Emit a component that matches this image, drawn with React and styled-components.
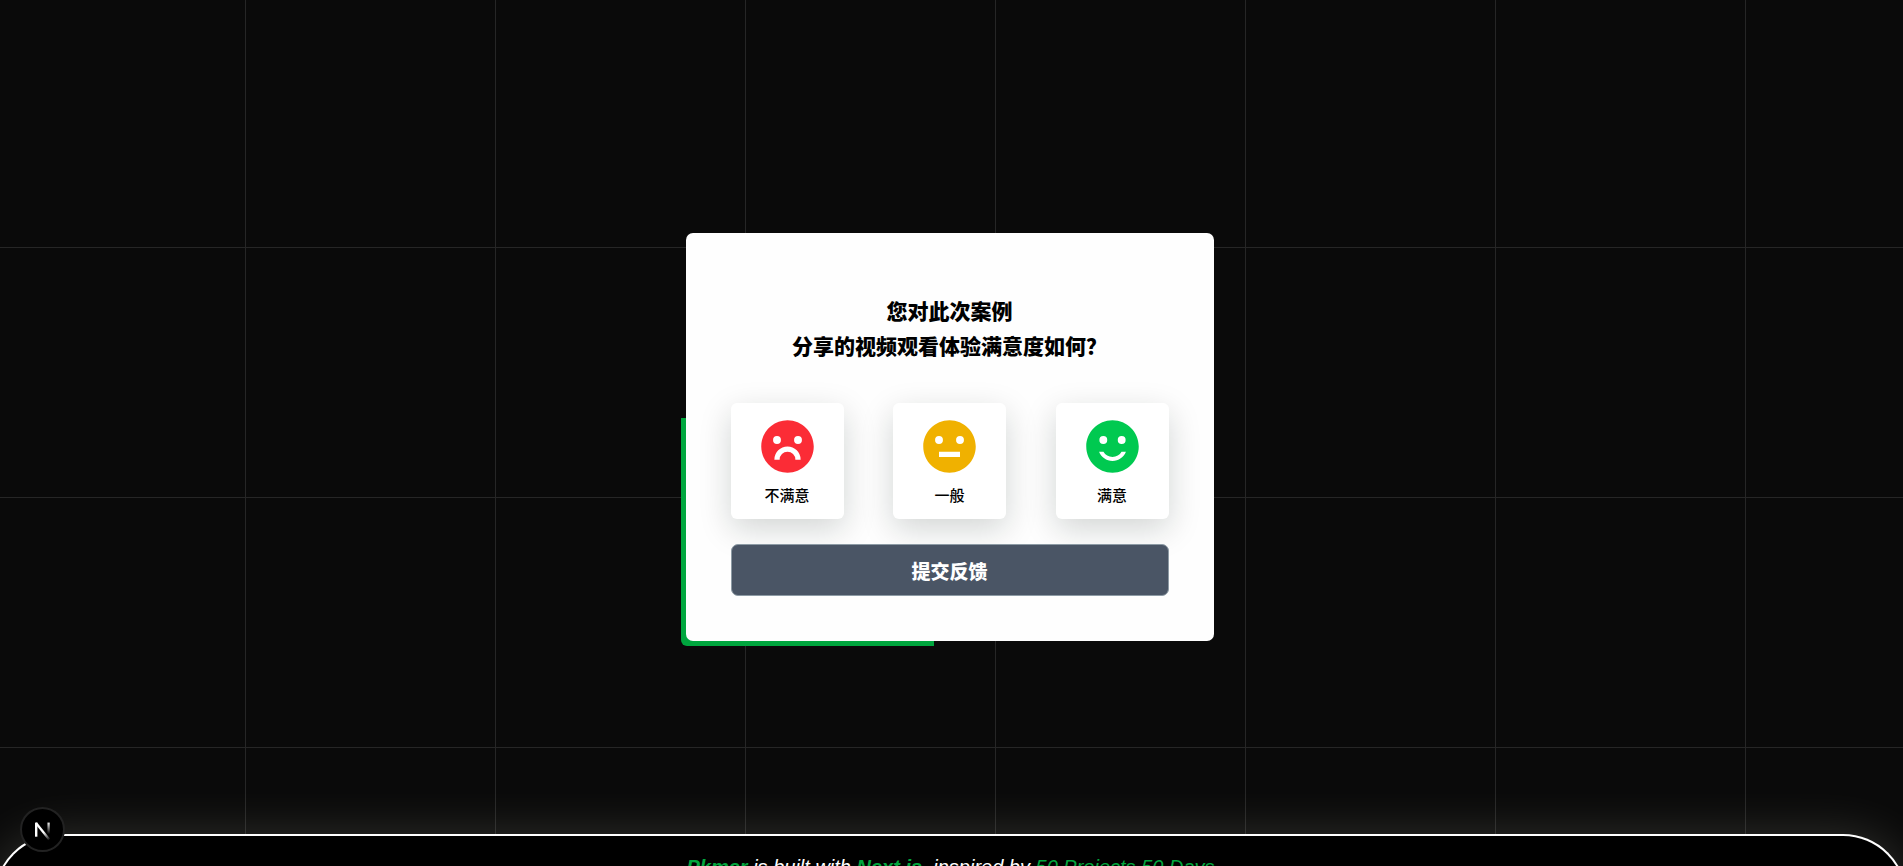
import React, { useState } from "react";
import styled, { createGlobalStyle } from "styled-components";

const GlobalStyle = createGlobalStyle`
  *, *::before, *::after { box-sizing: border-box; }
  body {
    margin: 0;
    background: #0a0a0a;
    color: #fff;
    font-family: "Liberation Sans", Arial, "Noto Sans CJK SC", sans-serif;
  }
`;

const Page = styled.div`
  position: relative;
  display: flex;
  flex-direction: column;
  height: 100vh;
  overflow: hidden;
  background-color: #0a0a0a;
  background-image:
    linear-gradient(to right, #262626 1px, transparent 1px),
    linear-gradient(to bottom, #262626 1px, transparent 1px);
  background-size: 250px 250px;
  background-position: 245px 247px;
`;

const Main = styled.main`
  flex: 0 0 calc(100vh - 32px);
  display: flex;
  align-items: center;
  justify-content: center;
  padding-top: 40px;
`;

const CardFrame = styled.div`
  position: relative;
  margin-right: 4px;

  &::before {
    content: "";
    position: absolute;
    left: -5px;
    bottom: -5px;
    width: 48%;
    height: 56%;
    border-radius: 0 0 0 6px;
    background: #00a63e;
  }
`;

const Card = styled.form`
  position: relative;
  display: flex;
  flex-direction: column;
  gap: 25px;
  width: 528px;
  padding: 60px 45px 45px;
  border-radius: 7px;
  background: #fefefe;
  color: #000;
  font-family: "Noto Sans CJK SC", sans-serif;
`;

const Title = styled.h1`
  margin: 0 0 15px;
  font-size: 21px;
  line-height: 35px;
  font-weight: 900;
  text-align: center;
`;

const Options = styled.fieldset`
  display: flex;
  justify-content: space-between;
  margin: 0;
  padding: 0;
  border: 0;
`;

const Option = styled.label`
  display: flex;
  flex-direction: column;
  align-items: center;
  gap: 5px;
  width: 113px;
  height: 116px;
  padding-top: 12px;
  border-radius: 6px;
  background: #fff;
  box-shadow: 0 10px 32px rgba(10, 25, 20, 0.18);
  font-size: 15px;
  line-height: 24px;
  font-weight: 500;
  cursor: pointer;
`;

const HiddenRadio = styled.input`
  position: absolute;
  opacity: 0;
  pointer-events: none;
`;

const Face = styled.svg`
  width: 63px;
  height: 63px;
  fill: ${(p) => p.$color};
`;

const Submit = styled.button`
  height: 52px;
  border: 1px solid #8d9ba5;
  border-radius: 7px;
  background: #4a5565;
  color: #fff;
  font-family: inherit;
  font-size: 19px;
  font-weight: 900;
  cursor: pointer;
`;

const Footer = styled.footer`
  flex: none;
  margin: 0 -4px 0 -6px;
  padding: 17px 64px 24px;
  border: 2px solid #fff;
  border-bottom: 0;
  border-radius: 64px 64px 0 0;
  background: #000;
  box-shadow: 0 0 50px rgba(255, 255, 230, 0.16);
  text-align: center;
  font-size: 20px;
  line-height: 28px;
  font-style: italic;
  white-space: nowrap;

  p { margin: 0; }
`;

const FooterLink = styled.a`
  color: #00a63e;
  text-decoration: none;
  font-weight: ${(p) => (p.$bold ? 700 : 400)};
`;

const DevBadge = styled.button`
  position: absolute;
  left: 20px;
  bottom: 14px;
  width: 45px;
  height: 45px;
  padding: 0;
  border: 2px solid #222;
  border-radius: 50%;
  background: #000;

  svg { display: block; width: 41px; height: 41px; }
`;

const DISC = "M12 22C6.477 22 2 17.523 2 12S6.477 2 12 2s10 4.477 10 10-4.477 10-10 10z";
const eyes = (l, r) =>
  [l, r].map((x) => `M${x - 1.5} 9.5a1.5 1.5 0 1 0 3 0a1.5 1.5 0 1 0-3 0z`).join("");

const OPTIONS = [
  { label: "不满意", color: "#fb2c36", d: DISC + eyes(8, 16) + "M7 17h2a3 3 0 0 1 6 0h2a5 5 0 0 0-10 0z" },
  { label: "一般", color: "#f0b100", d: DISC + eyes(8, 16) + "M8 14v2h8v-2z" },
  {
    label: "满意",
    color: "#00c950",
    d: DISC + eyes(8.5, 15.5) +
      "M12 16c-1.48 0-2.75-.81-3.45-2H6.88c.8 2.05 2.79 3.5 5.12 3.5s4.32-1.45 5.12-3.5h-1.67c-.7 1.19-1.97 2-3.45 2z",
  },
];

function NextMark() {
  return (
    <svg viewBox="0 0 41 41" fill="none" aria-hidden="true">
      <defs>
        <linearGradient id="stem" x1="0" y1="13" x2="0" y2="25" gradientUnits="userSpaceOnUse">
          <stop stopColor="#fff" />
          <stop offset="1" stopColor="#fff" stopOpacity="0" />
        </linearGradient>
        <linearGradient id="slash" x1="22" y1="23" x2="28" y2="31" gradientUnits="userSpaceOnUse">
          <stop stopColor="#fff" />
          <stop offset="1" stopColor="#fff" stopOpacity="0" />
        </linearGradient>
      </defs>
      <path d="M14.2 27.7V13.6" stroke="#fff" strokeWidth="2.4" />
      <path d="M14 14L27.2 30.5" stroke="url(#slash)" strokeWidth="2.3" />
      <path d="M26.6 13.6v12" stroke="url(#stem)" strokeWidth="2.3" />
    </svg>
  );
}

export default function App() {
  const [choice, setChoice] = useState("");
  return (
    <>
      <GlobalStyle />
      <Page>
        <Main>
          <CardFrame>
            <Card onSubmit={(e) => e.preventDefault()}>
              <Title>
                您对此次案例
                <br />
                <span lang="zh-CN">分享的视频观看体验满意度如何？</span>
              </Title>
              <Options>
                {OPTIONS.map(({ label, color, d }) => (
                  <Option key={label}>
                    <HiddenRadio
                      type="radio"
                      name="satisfaction"
                      value={label}
                      checked={choice === label}
                      onChange={() => setChoice(label)}
                    />
                    <Face viewBox="0 0 24 24" $color={color} aria-hidden="true">
                      <path fillRule="evenodd" d={d} />
                    </Face>
                    {label}
                  </Option>
                ))}
              </Options>
              <Submit type="submit">提交反馈</Submit>
            </Card>
          </CardFrame>
        </Main>
        <Footer>
          <p>
            <FooterLink href="#pkmer" $bold>Pkmer</FooterLink> is built with{" "}
            <FooterLink href="#next" $bold>Next.js</FooterLink>, inspired by{" "}
            <FooterLink href="#projects">50 Projects 50 Days</FooterLink>
          </p>
        </Footer>
        <DevBadge type="button" aria-label="Next.js">
          <NextMark />
        </DevBadge>
      </Page>
    </>
  );
}
